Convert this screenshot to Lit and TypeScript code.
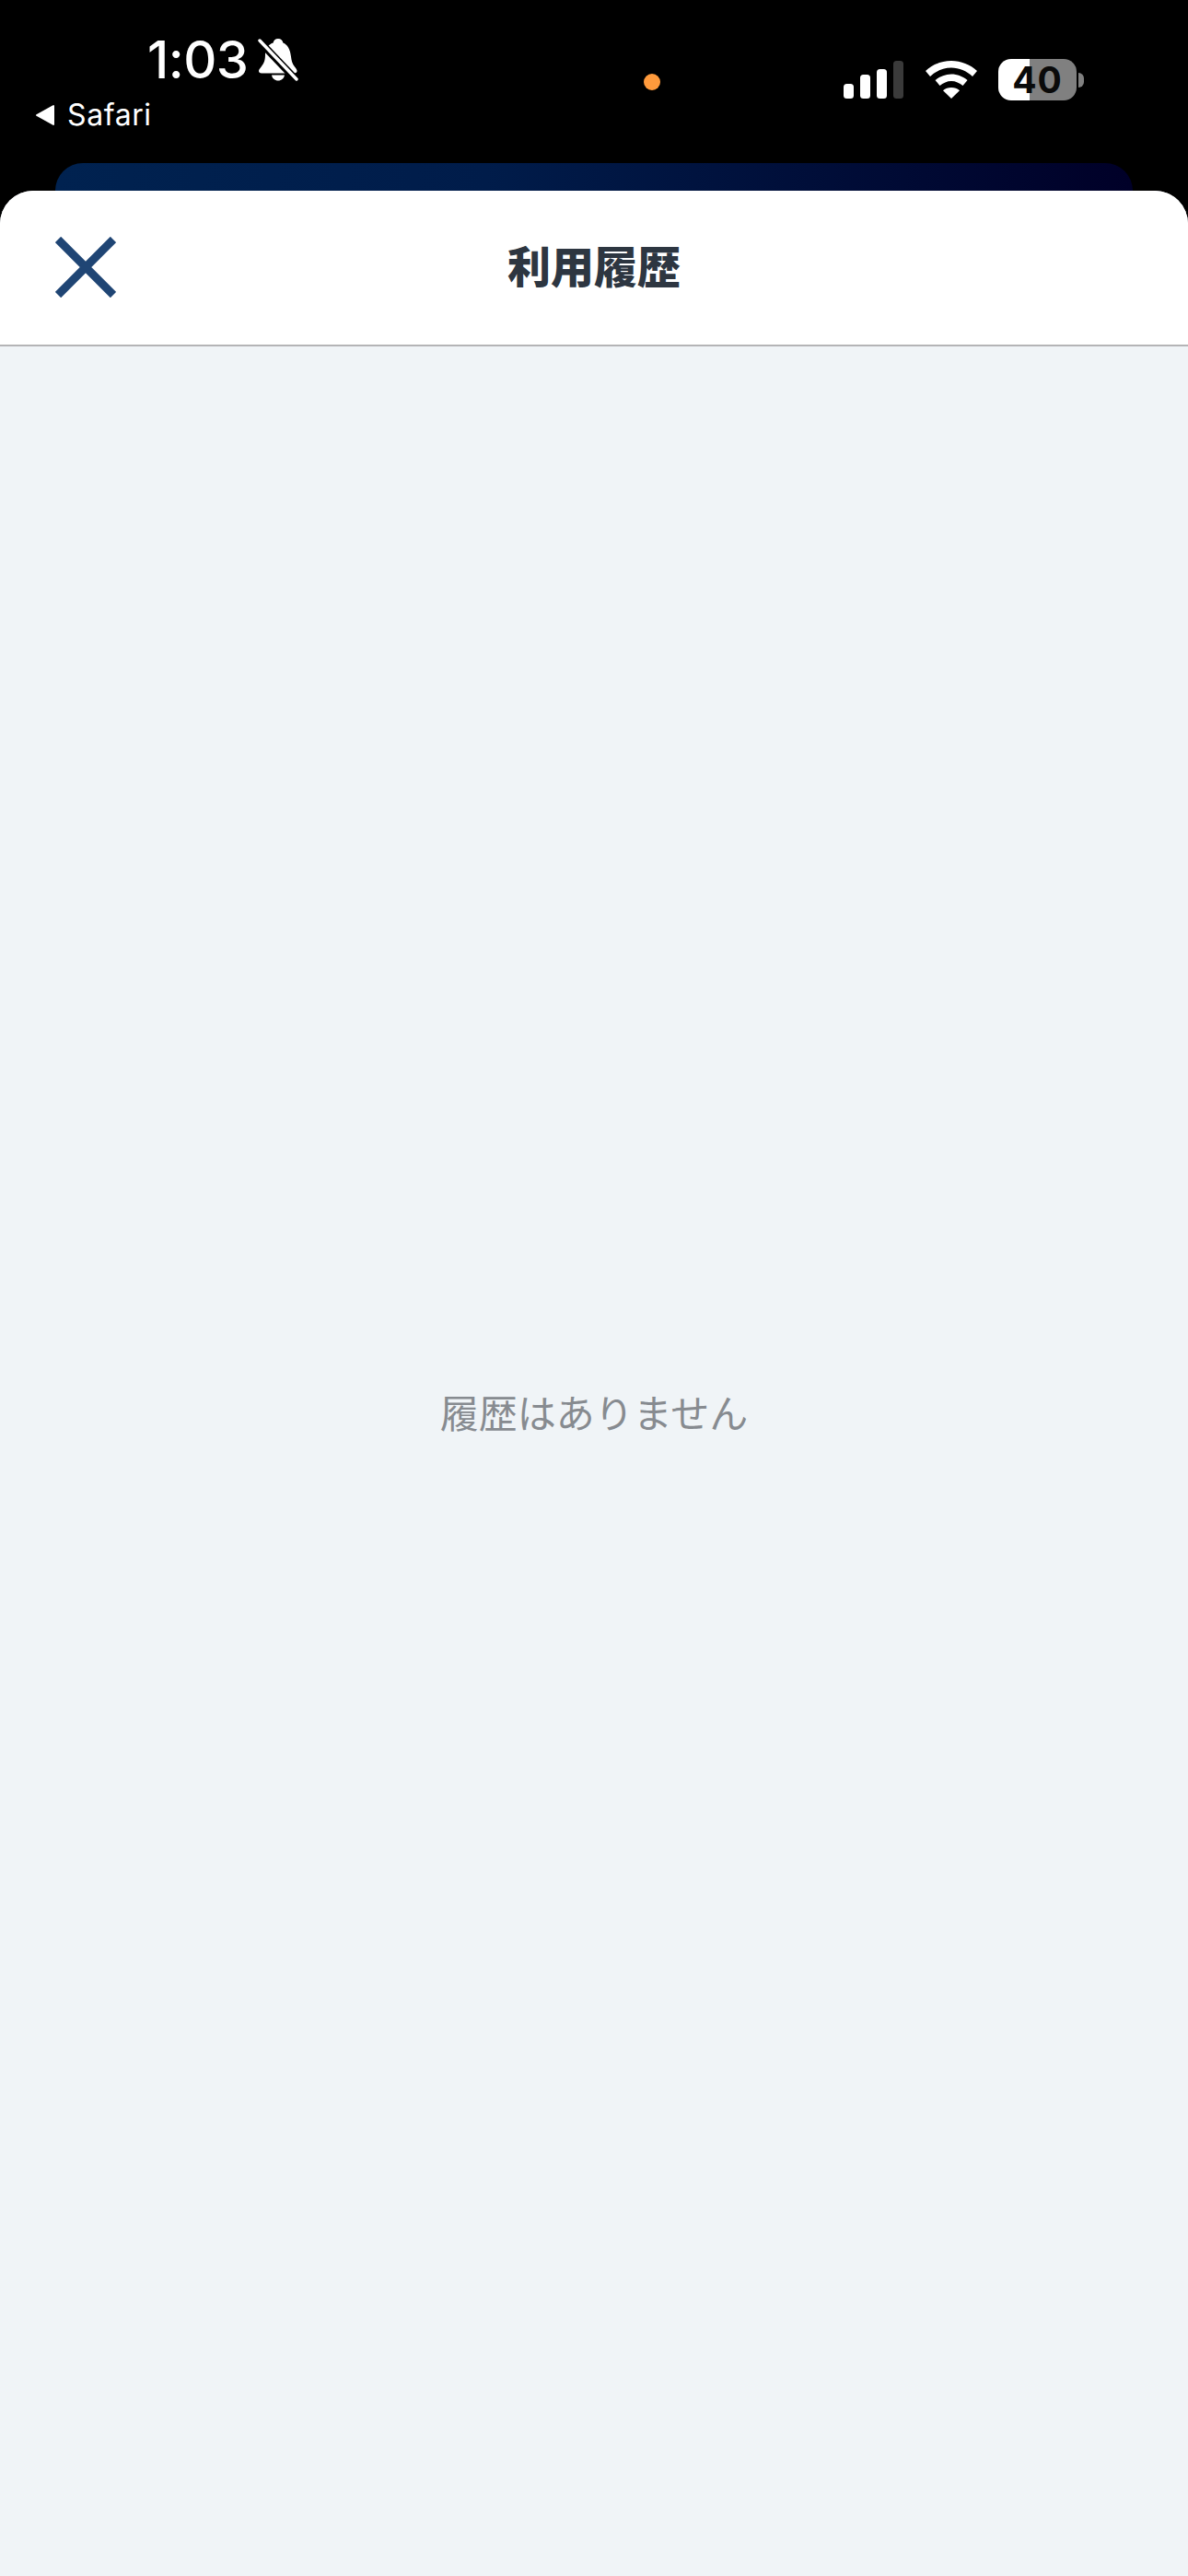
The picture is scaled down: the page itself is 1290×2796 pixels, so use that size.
import { LitElement, html, css } from "lit";
import { customElement } from "lit/decorators.js";

@customElement("app-root")
export class AppRoot extends LitElement {
  static styles = css`
    :host {
      display: block;
      width: 1290px;
      height: 2796px;
      background: #000;
      overflow: hidden;
      font-family: Inter, "Noto Sans CJK JP", sans-serif;
    }
    .status {
      height: 207px;
      display: flex;
      flex-direction: column;
      box-sizing: border-box;
    }
    .bar {
      height: 177px;
      display: grid;
      grid-template-columns: 620px 176px 1fr;
      box-sizing: border-box;
    }
    .left {
      display: flex;
      flex-direction: column;
      color: #fff;
    }
    .time-row {
      display: flex;
      align-items: center;
      padding: 33px 0 0 160px;
      height: 64px;
      gap: 11px;
    }
    .time {
      font-size: 56px;
      line-height: 64px;
      font-weight: 500;
      letter-spacing: -0.5px;
    }
    .back {
      display: flex;
      align-items: center;
      gap: 13px;
      padding: 6px 0 0 38px;
      font-size: 32px;
      line-height: 44px;
      font-weight: 400;
      letter-spacing: 0.6px;
    }
    .dot-col {
      display: flex;
      justify-content: center;
      padding: 80px 0 0 0;
      box-sizing: border-box;
      width: 176px;
    }
    .dot {
      width: 18px;
      height: 18px;
      border-radius: 50%;
      background: #ff9a3c;
    }
    .right {
      display: flex;
      align-items: flex-start;
      padding: 64px 0 0 120px;
    }
    .signal {
      margin-top: 2px;
      display: block;
    }
    .wifi {
      margin: 2px 0 0 22px;
      display: block;
    }
    .battery-wrap {
      display: flex;
      align-items: center;
      gap: 2px;
      margin-left: 22px;
    }
    .battery {
      width: 85px;
      height: 45px;
      border-radius: 14px;
      background: linear-gradient(90deg, #fff 0 40%, #808080 40% 100%);
      display: flex;
      align-items: center;
      justify-content: center;
      color: #0a0a0a;
      font-size: 39px;
      font-weight: 700;
      line-height: 45px;
      letter-spacing: 1px;
      font-family: Inter, sans-serif;
    }
    .nub {
      width: 6px;
      height: 16px;
      border-radius: 0 8px 8px 0;
      background: #808080;
    }
    .peek {
      height: 30px;
      margin: 0 60px;
      border-radius: 30px 30px 0 0;
      background: linear-gradient(90deg, #002250 0%, #001c4a 40%, #000028 100%);
    }
    .sheet {
      height: 2589px;
      display: flex;
      flex-direction: column;
      border-radius: 36px 36px 0 0;
      background: #f0f4f7;
      overflow: hidden;
    }
    .header {
      height: 169px;
      box-sizing: border-box;
      background: #fff;
      border-bottom: 2px solid #b4b4b6;
      display: grid;
      grid-template-columns: 1fr auto 1fr;
      align-items: center;
    }
    .close {
      display: block;
      margin: 0 0 2px 60px;
    }
    .title {
      font-family: "Noto Sans CJK JP", sans-serif;
      font-size: 47px;
      font-weight: 900;
      color: #2d3641;
      line-height: 60px;
      margin-bottom: 7px;
    }
    .empty {
      flex: 1;
      display: flex;
      align-items: center;
      justify-content: center;
      padding-bottom: 110px;
      font-family: "Noto Sans CJK JP", sans-serif;
      font-size: 42px;
      font-weight: 400;
      color: #878b90;
    }
  `;

  render() {
    return html`
      <div class="status">
        <div class="bar">
          <div class="left">
            <div class="time-row">
              <span class="time">1:03</span>
              <svg width="44" height="46" viewBox="0 0 44 46" aria-hidden="true">
                <path fill="#fff" d="M22 0c-3 0-5 2-5.400 4.600C11 6.500 8 11 8 17c0 6-1 9-4 13-2 2.500-3 3.500-3 5 0 1.500 1 2.500 3 2.500h35.500c2 0 3-1 3-2.500 0-1.500-1-2.500-2.500-4.500-3-4-3.500-7-4-11C35 11 32 6.500 27.400 4.600 27 2 25 0 22 0z"/>
                <path fill="#fff" d="M15 39.500h14c-.6 3.500-3.400 6-7 6s-6.400-2.500-7-6z"/>
                <path stroke="#000" stroke-width="8" d="M0 1l41 43"/>
                <path stroke="#fff" stroke-width="3.400" stroke-linecap="round" d="M2 2l40 42"/>
              </svg>
            </div>
            <div class="back">
              <svg width="22" height="24" viewBox="0 0 22 24" aria-hidden="true">
                <path fill="#fff" stroke="#fff" stroke-width="2" stroke-linejoin="round" d="M20 2v20L2 12z"/>
              </svg>
              <span>Safari</span>
            </div>
          </div>
          <div class="dot-col"><div class="dot"></div></div>
          <div class="right">
            <svg class="signal" width="66" height="41" viewBox="0 0 66 41" aria-hidden="true">
              <rect x="0" y="25" width="11" height="16" rx="3.500" fill="#fff"/>
              <rect x="18" y="15" width="11" height="26" rx="3.500" fill="#fff"/>
              <rect x="36" y="9" width="11" height="32" rx="3.500" fill="#fff"/>
              <rect x="54" y="0" width="11" height="41" rx="3.500" fill="#3a3a3a"/>
            </svg>
            <svg class="wifi" width="58" height="41" viewBox="0 0 58 41" aria-hidden="true">
              <path fill="#fff" d="M29 0c10.500 0 20.500 4 28 11l-5 6C45.500 11 37.500 7.500 29 7.500S12.500 11 6 17l-5-6C8.500 4 18.500 0 29 0z"/>
              <path fill="#fff" d="M29 14.500c6.500 0 12.500 2.500 17.500 6.500l-5 6C38 24 33.500 22 29 22s-9 2-12.500 5l-5-6c5-4 11-6.500 17.500-6.500z"/>
              <path fill="#fff" d="M29 29c3.500 0 6.500 1 9 3.200L29 41l-9-8.800C22.500 30 25.500 29 29 29z"/>
            </svg>
            <div class="battery-wrap">
              <div class="battery">40</div>
              <div class="nub"></div>
            </div>
          </div>
        </div>
        <div class="peek"></div>
      </div>
      <div class="sheet">
        <div class="header">
          <svg class="close" width="66" height="66" viewBox="0 0 66 66" aria-hidden="true">
            <path stroke="#1f4574" stroke-width="9" d="M3 3l60 60M63 3L3 63"/>
          </svg>
          <div class="title">利用履歴</div>
          <div></div>
        </div>
        <div class="empty">履歴はありません</div>
      </div>
    `;
  }
}
